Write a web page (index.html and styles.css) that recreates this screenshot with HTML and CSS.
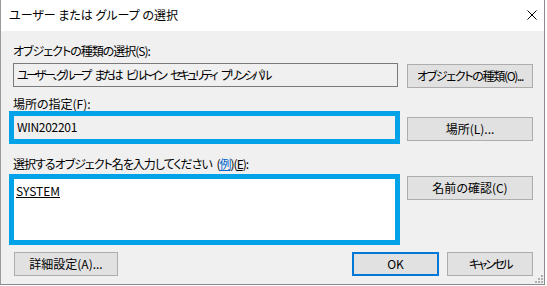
FILE: index.html
```html
<!DOCTYPE html>
<html>
  <head>
    <title>ユーザー または グループ の選択</title>
    <link rel="stylesheet" href="styles.css">
  </head>
  <body>
    <div class="window">
      <!-- Title bar -->
      <div class="titlebar">
        <span class="title">ユーザー または グループ の選択</span>
        <svg class="close" width="10" height="10" viewBox="0 0 10 10">
          <path d="M0.5 0.5 L9.5 9.5 M9.5 0.5 L0.5 9.5" stroke="#000" stroke-width="1" fill="none" />
        </svg>
      </div>

      <div class="content">
        <!-- Object type -->
        <div class="label first-label">オブジェクトの種類の選択(S):</div>
        <div class="row">
          <div class="left">
            <div class="textbox readonly first">ユーザー、グループ または ビルトイン セキュリティ プリンシパル</div>
          </div>
          <button class="button side first-btn">オブジェクトの種類(O)...</button>
        </div>

        <!-- Location -->
        <div class="label">場所の指定(F):</div>
        <div class="row">
          <div class="left">
            <div class="marked">
              <div class="textbox readonly inner">WIN202201</div>
            </div>
          </div>
          <button class="button side second-btn">場所(L)...</button>
        </div>

        <!-- Object names -->
        <div class="label third-label">選択するオブジェクト名を入力してください (<span class="link">例</span>)(<u>E</u>):</div>
        <div class="row">
          <div class="left">
            <div class="marked">
              <div class="textbox names"><u>SYSTEM</u></div>
            </div>
          </div>
          <button class="button side third-btn">名前の確認(C)</button>
        </div>

        <!-- Footer -->
        <div class="footer">
          <button class="button advanced">詳細設定(A)...</button>
          <div class="footer-right">
            <button class="button ok">OK</button>
            <button class="button cancel">キャンセル</button>
          </div>
        </div>
      </div>

      <svg class="grip" width="8" height="8" viewBox="0 0 8 8">
        <rect x="6" y="0" width="2" height="2" fill="#b0b0b0" />
        <rect x="3" y="3" width="2" height="2" fill="#b0b0b0" />
        <rect x="6" y="3" width="2" height="2" fill="#b0b0b0" />
        <rect x="0" y="6" width="2" height="2" fill="#b0b0b0" />
        <rect x="3" y="6" width="2" height="2" fill="#b0b0b0" />
        <rect x="6" y="6" width="2" height="2" fill="#b0b0b0" />
      </svg>
    </div>
  </body>
</html>
```

FILE: styles.css
```css
body {
  margin: 0;
  padding: 0;
  background-color: #ffffff;
  font-family: "Noto Sans CJK JP", sans-serif;
  font-size: 12px;
  font-feature-settings: "palt";
  color: #000000;
}
.window {
  position: relative;
  width: 543px;
  height: 284px;
  border-left: 1px solid #9a9a9a;
  border-right: 1px solid #8c8c8c;
  border-bottom: 1px solid #8c8c8c;
  background-color: #f0f0f0;
  display: flex;
  flex-direction: column;
}
.titlebar {
  height: 31px;
  background-color: #ffffff;
  display: flex;
  align-items: center;
  justify-content: space-between;
  padding: 0 7px 0 8px;
}
.title {
  line-height: 14px;
  margin-top: -1px;
}
.close {
  display: block;
  margin-top: -1px;
}
.content {
  padding: 13px 11px 0 8px;
  display: flex;
  flex-direction: column;
}
.label {
  line-height: 14px;
  padding-left: 4px;
  margin-bottom: 5px;
}
.first-label {
  letter-spacing: -1px;
}
.row {
  display: flex;
  align-items: flex-start;
  justify-content: space-between;
}
.left {
  width: 391px;
}
.textbox {
  box-sizing: border-box;
  border: 1px solid #7a7a7a;
  padding: 0 3px;
  line-height: 22px;
  white-space: nowrap;
  overflow: hidden;
}
.readonly {
  background-color: #f0f0f0;
}
.first {
  height: 24px;
  margin: 0 2px 0 4px;
  letter-spacing: -2.7px;
  word-spacing: 5px;
}
.marked {
  border: 5px solid #00a2e8;
}
.inner {
  height: 23px;
  border: none;
  padding-left: 3px;
  letter-spacing: -0.3px;
}
.names {
  height: 61px;
  border: none;
  background-color: #ffffff;
  padding: 5px 2px;
  line-height: 14px;
}
.link {
  color: #0066cc;
  text-decoration: underline;
}
.button {
  box-sizing: border-box;
  height: 24px;
  background-color: #e1e1e1;
  border: 1px solid #adadad;
  font-family: inherit;
  font-size: 12px;
  font-feature-settings: "palt";
  color: #000000;
  padding: 0;
  line-height: 20px;
  white-space: nowrap;
}
.side {
  width: 126px;
}
.first-btn {
  margin-top: 1px;
  letter-spacing: -1.3px;
}
.row + .label {
  margin-top: 9px;
  margin-bottom: 0;
}
.third-label.label {
  margin-top: 13px;
  margin-bottom: 3px;
  letter-spacing: -1px;
  word-spacing: 3px;
}
.second-btn {
  margin-top: 6px;
}
.third-btn {
  margin-top: 2px;
}
.footer {
  margin-top: 7px;
  padding-left: 5px;
  display: flex;
  justify-content: space-between;
}
.advanced {
  width: 104px;
}
.footer-right {
  display: flex;
  gap: 8px;
}
.ok {
  width: 87px;
  border: 2px solid #0078d7;
}
.cancel {
  width: 86px;
  letter-spacing: -2.4px;
}
.grip {
  position: absolute;
  right: 1px;
  bottom: 1px;
}
```
